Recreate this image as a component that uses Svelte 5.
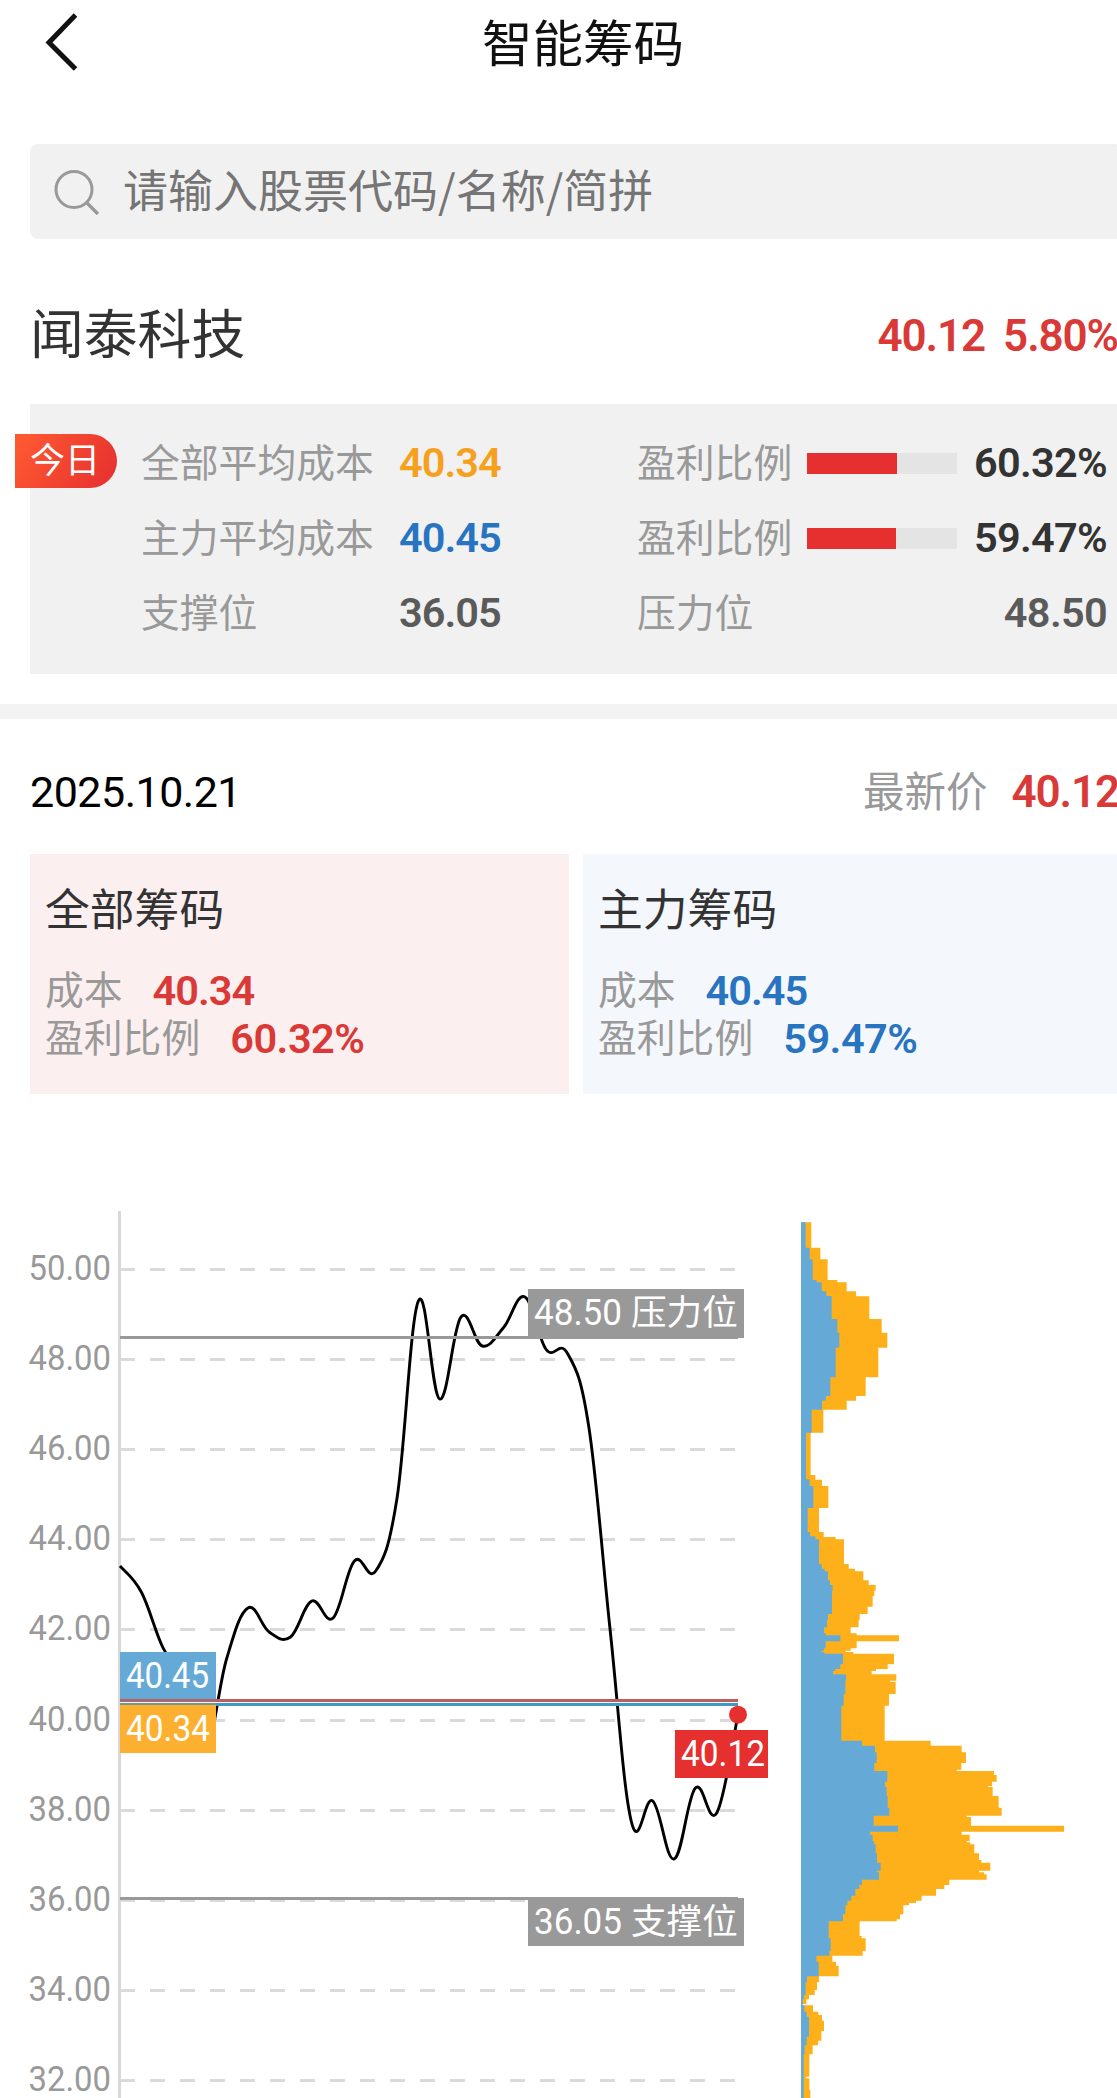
<script lang="ts">
	type Pt = [number, number];

	const today = [
		{ label: '全部平均成本', value: '40.34', tone: 'orange', label2: '盈利比例', value2: '60.32%', rate: 60 },
		{ label: '主力平均成本', value: '40.45', tone: 'blue', label2: '盈利比例', value2: '59.47%', rate: 59.3 },
		{ label: '支撑位', value: '36.05', tone: 'plain', label2: '压力位', value2: '48.50', rate: 0 }
	];

	const cards = [
		{ title: '全部筹码', cost: '40.34', rate: '60.32%', tone: 'red' },
		{ title: '主力筹码', cost: '40.45', rate: '59.47%', tone: 'blue' }
	];

	const ticks = [50, 48, 46, 44, 42, 40, 38, 36, 34, 32];
	const tickY = (v: number) => Math.round(1269 + (50 - v) * 45.06) + 0.5;

	const prices = [
		1566, 1592, 1647, 1683, 1750, 1659, 1608, 1632, 1637, 1601, 1618, 1561, 1571, 1498, 1301,
		1399, 1317, 1346, 1327.5, 1297, 1349.5, 1353.5, 1427, 1630, 1822, 1801, 1859, 1788, 1813, 1714.7
	];
	const points: Pt[] = prices.map((y, i) => [120 + (i * 618) / 29, y]);

	function smooth(pts: Pt[]): string {
		const at = (i: number) => pts[Math.max(0, Math.min(pts.length - 1, i))];
		// control point on the given side of point i
		const control = (i: number, side: number) =>
			[0, 1].map((k) => at(i)[k] + side * 0.19 * (at(i + 1)[k] - at(i - 1)[k]));
		let d = `M${pts[0]}`;
		for (let i = 1; i < pts.length; i++) {
			d += `C${control(i - 1, 1)} ${control(i, -1)} ${pts[i]}`;
		}
		return d;
	}

	// [bottom edge, right edge] of every step, in thirds of a pixel
	const allChips: Pt[] = [
		[143, 94], [178, 121], [240, 143], [247, 172], [274, 200], [289, 228], [357, 268], [398, 305],
		[443, 322], [532, 295], [588, 257], [602, 228], [629, 200], [698, 130], [825, 92], [839, 106],
		[858, 126], [924, 145], [996, 117], [1011, 131], [1018, 167], [1092, 192], [1106, 206],
		[1114, 225], [1141, 250], [1155, 266], [1172, 287], [1188, 283], [1220, 278], [1242, 263],
		[1260, 239], [1282, 236], [1300, 212], [1306, 230], [1324, 357], [1345, 230], [1352, 212],
		[1356, 197], [1361, 220], [1393, 342], [1407, 323], [1413, 288], [1423, 275], [1442, 349],
		[1445, 330], [1482, 347], [1517, 327], [1622, 314], [1637, 452], [1657, 545], [1689, 558],
		[1709, 544], [1713, 530], [1725, 642], [1745, 650], [1758, 636], [1761, 624], [1788, 638],
		[1823, 656], [1847, 665], [1851, 560], [1877, 573], [1895, 852], [1904, 545], [1923, 569],
		[1927, 560], [1933, 571], [1960, 583], [1980, 597], [1988, 604], [2012, 631], [2017, 597],
		[2023, 612], [2039, 620], [2055, 508], [2067, 493], [2087, 468], [2102, 425], [2109, 408],
		[2116, 387], [2143, 370], [2158, 360], [2164, 350], [2208, 239], [2215, 245], [2253, 257],
		[2267, 248], [2285, 157], [2297, 168], [2329, 176], [2347, 117], [2370, 111], [2385, 104],
		[2398, 87], [2412, 79], [2416, 66], [2435, 99], [2445, 115], [2462, 126], [2493, 132],
		[2522, 124], [2536, 114], [2563, 98], [2630, 88], [2635, 78], [2670, 88], [2694, 91]
	];
	const mainChips: Pt[] = [
		[143, 77], [178, 89], [240, 98], [247, 110], [274, 125], [288, 139], [357, 155], [398, 172],
		[443, 178], [532, 167], [588, 151], [602, 138], [629, 126], [698, 95], [838, 78], [858, 89],
		[924, 100], [996, 83], [1009, 90], [1018, 106], [1092, 117], [1106, 125], [1114, 134],
		[1141, 144], [1155, 150], [1172, 158], [1242, 156], [1260, 144], [1282, 141], [1300, 132],
		[1306, 138], [1324, 181], [1345, 137], [1352, 132], [1356, 124], [1361, 133], [1393, 189],
		[1407, 181], [1413, 165], [1423, 159], [1442, 198], [1482, 196], [1517, 191], [1622, 184],
		[1637, 246], [1657, 285], [1689, 290], [1713, 283], [1745, 322], [1761, 315], [1788, 320],
		[1823, 323], [1847, 328], [1877, 281], [1895, 354], [1904, 270], [1923, 278], [1933, 282],
		[1960, 287], [1988, 291], [2012, 302], [2017, 290], [2039, 297], [2055, 246], [2067, 238],
		[2087, 226], [2102, 214], [2116, 202], [2143, 196], [2164, 189], [2215, 146], [2253, 152],
		[2267, 148], [2285, 109], [2329, 116], [2347, 81], [2385, 77], [2398, 72], [2416, 68],
		[2435, 73], [2450, 80], [2510, 87], [2536, 80], [2563, 74], [2694, 71]
	];
	const steps = (rows: Pt[]) => 'M63 67' + rows.map(([y, x]) => `H${x}V${y}`).join('') + 'H63Z';
</script>

<div class="page">
	<header class="nav">
		<svg class="back" viewBox="0 0 34 60" width="34" height="60" aria-hidden="true">
			<path d="M30.500 3 4 30.500 30.500 57" fill="none" stroke="#111" stroke-width="5" />
		</svg>
		<h1>智能筹码</h1>
	</header>

	<div class="search">
		<svg viewBox="0 0 46 46" width="46" height="46" aria-hidden="true">
			<circle cx="20" cy="20.500" r="18" fill="none" stroke="#999" stroke-width="3" />
			<path d="M32.500 33.500 44 45" stroke="#999" stroke-width="3.400" />
		</svg>
		<span>请输入股票代码/名称/简拼</span>
	</div>

	<div class="stock">
		<h2>闻泰科技</h2>
		<div class="quote num red"><span>40.12</span><span>5.80%</span></div>
	</div>

	<section class="today">
		<span class="badge">今日</span>
		{#each today as row}
			<div class="row">
				<span class="label">{row.label}</span>
				<span class="num value {row.tone}">{row.value}</span>
				<span class="label">{row.label2}</span>
				{#if row.rate}
					<span class="bar"><i style="width:{row.rate}%"></i></span>
				{/if}
				<span class="num value2" class:plain={!row.rate}>{row.value2}</span>
			</div>
		{/each}
	</section>

	<div class="divider"></div>

	<div class="latest">
		<span class="date">2025.10.21</span>
		<span class="label">最新价</span>
		<span class="num red">40.12</span>
	</div>

	<div class="cards">
		{#each cards as card}
			<div class="card {card.tone}-card">
				<h3>{card.title}</h3>
				<p><span class="label">成本</span><span class="num {card.tone}">{card.cost}</span></p>
				<p><span class="label">盈利比例</span><span class="num rate {card.tone}">{card.rate}</span></p>
			</div>
		{/each}
	</div>

	<svg class="chart" viewBox="0 1210 1117 888" width="1117" height="888">
		{#each ticks as t}
			<line class="grid" x1="120" x2="736" y1={tickY(t)} y2={tickY(t)} />
			<text class="tick" x="28.500" y={tickY(t) + 10} textLength="82.500" lengthAdjust="spacingAndGlyphs">{t}.00</text>
		{/each}
		<rect x="118" y="1211" width="3" height="887" fill="#d8d8d8" />

		<path d={smooth(points)} fill="none" stroke="#000" stroke-width="2.900" />

		<rect x="120" y="1652" width="96" height="48" fill="#65aad7" />
		<rect x="120" y="1704" width="96" height="49" fill="#fdb030" />
		<text class="tag" x="126" y="1688" textLength="83" lengthAdjust="spacingAndGlyphs">40.45</text>
		<text class="tag" x="126" y="1741" textLength="84" lengthAdjust="spacingAndGlyphs">40.34</text>

		<rect x="120" y="1699" width="618" height="3" fill="#b9605c" />
		<rect x="120" y="1702" width="618" height="1" fill="#f2f6f8" />
		<rect x="120" y="1703" width="618" height="3" fill="#3f98c8" />
		<rect x="120" y="1700" width="96" height="2" fill="#a9667f" />
		<rect x="120" y="1703" width="96" height="2" fill="#6f9a86" />
		<rect x="120" y="1705" width="96" height="1" fill="#fdb030" />

		<rect x="120" y="1336" width="618" height="3" fill="#999" />
		<rect x="528" y="1289" width="216" height="49" fill="#999" />
		<text class="tag" x="534" y="1325" textLength="88" lengthAdjust="spacingAndGlyphs">48.50</text>
		<text class="tag cjk" x="631" y="1325">压力位</text>

		<rect x="120" y="1897" width="618" height="3" fill="#999" />
		<rect x="528" y="1898" width="216" height="48" fill="#999" />
		<text class="tag" x="534" y="1934" textLength="88" lengthAdjust="spacingAndGlyphs">36.05</text>
		<text class="tag cjk" x="631" y="1934">支撑位</text>

		<rect x="675" y="1730" width="93" height="48" fill="#e5302f" />
		<text class="tag" x="681" y="1766" textLength="84" lengthAdjust="spacingAndGlyphs">40.12</text>
		<circle cx="738" cy="1714.700" r="9" fill="#e5302f" />

		<g transform="translate(780 1200) scale(0.33333)">
			<path d={steps(allChips)} fill="#fdb019" />
			<path d={steps(mainChips)} fill="#65aad7" />
		</g>
	</svg>
</div>

<style>
	:global(body) {
		background: #fff;
		overflow: hidden;
	}

	.page {
		width: 1117px;
		height: 2098px;
		overflow: hidden;
		font-family: Roboto, 'Noto Sans CJK SC', sans-serif;
		color: #333;
	}

	h1,
	h2,
	h3,
	p {
		margin: 0;
		font-weight: 400;
	}

	.nav {
		display: flex;
		align-items: center;
		width: 1152px;
		height: 84px;
	}

	.back {
		margin-left: 45px;
	}

	h1 {
		margin-left: 403px;
		font-size: 50.5px;
		line-height: 84px;
		padding-top: 5px;
		color: #111;
	}

	.search {
		display: flex;
		align-items: center;
		gap: 23px;
		box-sizing: border-box;
		width: 1092px;
		height: 95px;
		margin: 60px 0 0 30px;
		padding: 0 24px;
		border-radius: 8px;
		background: #f1f1f1;
		color: #757575;
		font-family: 'Noto Sans CJK SC', sans-serif;
		font-size: 45px;
		white-space: nowrap;
	}

	.search span {
		line-height: 89px;
		height: 95px;
	}

	.stock {
		display: flex;
		justify-content: space-between;
		width: 1092px;
		height: 165px;
		margin-left: 30px;
	}

	h2 {
		font-size: 53.8px;
		line-height: 193px;
	}

	.quote {
		display: flex;
		gap: 18px;
		margin-right: 4px;
		line-height: 194px;
	}

	.num {
		font-weight: 600;
		letter-spacing: -1px;
	}

	.quote.num,
	.latest .num {
		font-size: 44px;
		letter-spacing: -1.1px;
	}

	.today {
		position: relative;
		box-sizing: border-box;
		width: 1092px;
		height: 270px;
		margin-left: 30px;
		padding: 22px 15px 0 111px;
		background: #f1f1f1;
		font-size: 41.5px;
	}

	.badge {
		position: absolute;
		left: -15px;
		top: 30px;
		width: 102px;
		height: 54px;
		box-sizing: border-box;
		padding-left: 15px;
		border-radius: 0 27px 27px 0;
		background: linear-gradient(120deg, #ff5b32, #e52f2f);
		color: #fff;
		font-size: 35px;
		line-height: 56px;
	}

	.row {
		display: flex;
		align-items: center;
		height: 75px;
		line-height: 75px;
	}

	.label {
		font-size: 38.8px;
		color: #999;
	}

	.row .label:first-child {
		width: 258px;
	}

	.row .num {
		line-height: 73px;
		height: 75px;
	}

	.value {
		width: 238px;
	}

	.value2 {
		margin-left: auto;
		letter-spacing: -0.7px;
	}

	.bar {
		width: 150px;
		height: 21px;
		margin-left: 15px;
		background: #e4e4e4;
	}

	.bar i {
		display: block;
		height: 100%;
		background: #e5302f;
	}

	.orange {
		color: #f5a11f;
	}

	.blue {
		color: #2874c0;
	}

	.red {
		color: #d93a37;
	}

	.plain {
		color: #5a5a5a;
	}

	.divider {
		height: 15px;
		margin-top: 30px;
		background: #f3f3f3;
	}

	.latest {
		display: flex;
		width: 1089px;
		height: 135px;
		margin-left: 30px;
		line-height: 147px;
	}

	.latest .label {
		margin-left: auto;
		margin-right: 24px;
		font-size: 41.5px;
	}

	.date {
		font-size: 43px;
		letter-spacing: -0.5px;
		color: #000;
	}

	.cards {
		display: flex;
		gap: 14px;
		width: 1092px;
		margin-left: 30px;
	}

	.card {
		flex: 1;
		box-sizing: border-box;
		height: 240px;
		padding: 22px 15px;
	}

	.red-card {
		background: #fcefef;
	}

	.blue-card {
		background: #f4f7fc;
	}

	h3 {
		margin-bottom: 21px;
		font-size: 44.8px;
		line-height: 70px;
	}

	.card p {
		display: flex;
		gap: 30px;
		height: 48px;
		font-size: 41.5px;
		line-height: 48px;
	}

	.rate {
		letter-spacing: -0.5px;
	}

	.chart {
		display: block;
		margin-top: 116px;
	}

	.grid {
		stroke: #dadada;
		stroke-width: 3;
		stroke-dasharray: 15 15;
	}

	.tick {
		font-size: 35.5px;
		fill: #999;
	}

	.tag {
		font-size: 36px;
		fill: #fff;
	}

	.cjk {
		font-size: 35.6px;
	}
</style>
